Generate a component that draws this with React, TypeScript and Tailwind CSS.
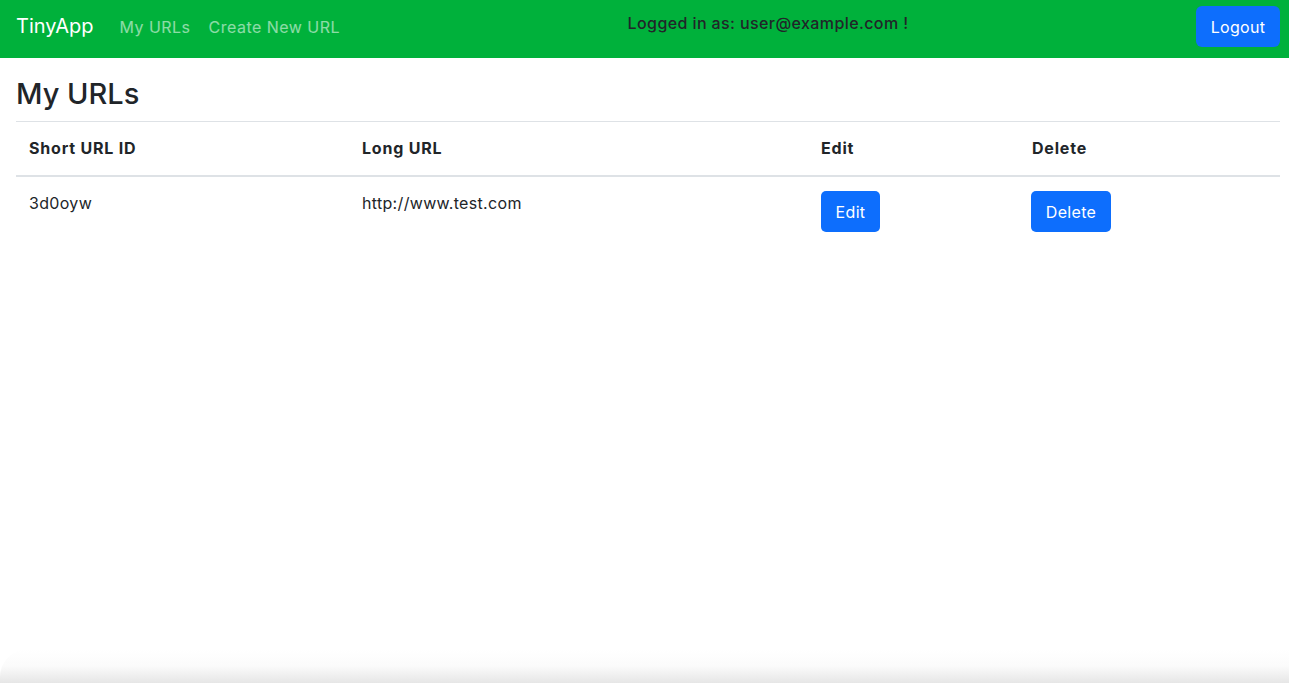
import { useState } from 'react';

type UrlRow = { id: string; longUrl: string };

const urls: UrlRow[] = [{ id: '3d0oyw', longUrl: 'http://www.test.com' }];

function Navbar({ email }: { email: string }) {
  return (
    <nav className="flex h-[58px] items-start bg-[#00b13b] pl-4 pr-[9px]">
      <a href="#" className="mt-[13px] text-[20px] leading-[26px] text-white">
        TinyApp
      </a>
      <div className="ml-[26px] mt-[15px] flex gap-[18px] text-[16px] leading-6 tracking-[0.03em] text-white/55">
        <a href="#">My URLs</a>
        <a href="#">Create New URL</a>
      </div>
      <p className="mt-[11px] flex-1 text-center text-[16px] leading-6 font-medium tracking-[0.025em] text-[#212529]">
        Logged in as: {email} !
      </p>
      <button className="mt-[6px] h-[41px] w-[84px] rounded-md bg-[#0d6efd] text-[16px] tracking-[0.02em] text-white">
        Logout
      </button>
    </nav>
  );
}

export default function App() {
  const [rows] = useState(urls);

  return (
    <div
      className="relative flex min-h-[683px] flex-col bg-white text-[#212529]"
      style={{ fontFamily: 'Inter, "Noto Sans", sans-serif' }}
    >
      <Navbar email="user@example.com" />

      <main className="flex-1 pl-4 pr-[9px]">
        <h2 className="mt-[18px] mb-[9px] text-[29px] leading-9 font-medium">My URLs</h2>

        <table className="w-full border-collapse text-left text-[16px] tracking-[0.02em]">
          <thead>
            <tr className="border-t border-b-2 border-t-[#dee2e6] border-b-[#dee2e6]">
              <th className="w-[333px] px-[13px] pt-[14px] pb-[15px] leading-6 font-bold tracking-[0.05em]">Short URL ID</th>
              <th className="w-[459px] px-[13px] pt-[14px] pb-[15px] leading-6 font-bold tracking-[0.05em]">Long URL</th>
              <th className="w-[211px] px-[13px] pt-[14px] pb-[15px] leading-6 font-bold tracking-[0.05em]">Edit</th>
              <th className="px-[13px] pt-[14px] pb-[15px] leading-6 font-bold tracking-[0.05em]">Delete</th>
            </tr>
          </thead>
          <tbody>
            {rows.map((row) => (
              <tr key={row.id}>
                <td className="px-[13px] pt-[14px] pb-3 align-top leading-6">{row.id}</td>
                <td className="px-[13px] pt-[14px] pb-3 align-top leading-6">{row.longUrl}</td>
                <td className="px-[13px] pt-[14px] pb-3 align-top">
                  <button className="h-[41px] w-[59px] rounded-[5px] bg-[#0d6efd] text-white">Edit</button>
                </td>
                <td className="px-[12px] pt-[14px] pb-3 align-top">
                  <button className="h-[41px] w-[80px] rounded-[5px] bg-[#0d6efd] text-white">Delete</button>
                </td>
              </tr>
            ))}
          </tbody>
        </table>
      </main>

      {/* window edge shadow at the bottom of the capture */}
      <div className="h-[34px] rounded-tl-[28px] bg-gradient-to-b from-white via-[#fbfbfb] to-[#e6e6e6]" />
    </div>
  );
}
